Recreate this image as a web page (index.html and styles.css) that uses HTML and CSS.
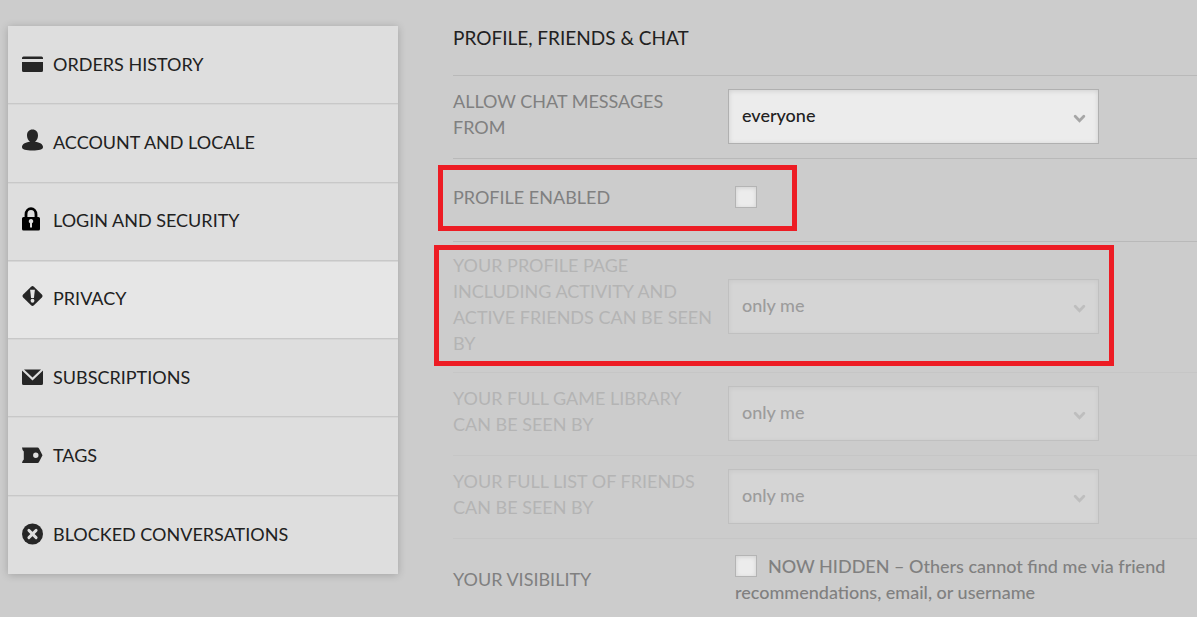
FILE: index.html
```html
<!DOCTYPE html>
<html lang="en">
<head>
    <meta charset="UTF-8">
    <meta name="viewport" content="width=device-width, initial-scale=1.0">
    <title>Privacy settings</title>
    <link rel="stylesheet" href="styles.css">
</head>
<body>
    <div class="page">
        <nav class="menu">
            <a class="menu-item" href="#orders">
                <svg class="icon" viewBox="0 0 21 22"><path d="M0 6V5Q0 3.500 1.500 3.500H19.500Q21 3.500 21 5V6ZM0 9H21V17.500Q21 19 19.500 19H1.500Q0 19 0 17.500Z"/></svg>
                Orders history
            </a>
            <a class="menu-item" href="#account">
                <svg class="icon icon-high" viewBox="0 0 21 22"><path d="M10.500 0.500C14 0.500 16 3 16 6.500C16 9 15 11.500 13 12.800C18 13.200 21 15.500 21 18C21 20.700 17 21.500 10.500 21.500S0 20.700 0 18C0 15.500 3 13.200 8 12.800C6 11.500 5 9 5 6.500C5 3 7 0.500 10.500 0.500Z"/></svg>
                Account and locale
            </a>
            <a class="menu-item" href="#login">
                <svg class="icon icon-lock" viewBox="0 0 21 24"><path d="M4 11V7.500C4 -0.300 14 -0.300 14 7.500V11" fill="none" stroke="#000" stroke-width="2.800"/><path fill-rule="evenodd" d="M1.500 10H16.500Q18 10 18 11.500V22Q18 23.500 16.500 23.500H1.500Q0 23.500 0 22V11.500Q0 10 1.500 10ZM9 12A2.200 2.200 0 0 0 8 16.200V20.500H10V16.200A2.200 2.200 0 0 0 9 12Z"/></svg>
                Login and security
            </a>
            <a class="menu-item active" href="#privacy">
                <svg class="icon icon-high" viewBox="0 0 22 22"><path d="M9.500 1.200Q11 -0.200 12.500 1.200L20.800 9.500Q22.200 11 20.800 12.500L12.500 20.800Q11 22.200 9.500 20.800L1.200 12.500Q-0.200 11 1.200 9.500Z"/><path class="cutout" d="M8.500 4.500H13.500L12.500 13H9.500Z"/><circle class="cutout" cx="11" cy="16" r="2"/></svg>
                Privacy
            </a>
            <a class="menu-item" href="#subscriptions">
                <svg class="icon" viewBox="0 0 21 22"><path d="M2 3.500H19L10.500 11.500ZM0 4.500L10.500 14.500L21 4.500V17.500Q21 19 19.500 19H1.500Q0 19 0 17.500Z"/></svg>
                Subscriptions
            </a>
            <a class="menu-item" href="#tags">
                <svg class="icon" viewBox="0 0 21 22"><path fill-rule="evenodd" d="M0 3.500H15.500Q16.500 3.500 17 4.500L20.500 11.200L17 18Q16.500 19 15.500 19H0Q0.300 16.500 1.800 15.500V7.500Q0.300 6.500 0 3.500ZM13.800 8.500A2.700 2.700 0 1 0 13.800 13.900A2.700 2.700 0 1 0 13.800 8.500Z"/></svg>
                Tags
            </a>
            <a class="menu-item" href="#blocked">
                <svg class="icon" viewBox="0 0 22 22"><circle cx="11" cy="11" r="11"/><path class="cross" d="M7.200 7.200L14.800 14.800M14.800 7.200L7.200 14.800"/></svg>
                Blocked conversations
            </a>
        </nav>

        <main class="settings">
            <h1 class="title">Profile, friends &amp; chat</h1>

            <div class="row">
                <label class="label" for="chat">Allow chat messages from</label>
                <div class="select">
                    <select id="chat"><option>everyone</option><option>only me</option></select>
                    <svg class="arrow" viewBox="0 0 12 8"><path d="M2 2L6 6L10 2"/></svg>
                </div>
            </div>

            <div class="row marked">
                <label class="label" for="enabled">Profile enabled</label>
                <div class="check"><input type="checkbox" id="enabled"></div>
                <div class="mark mark-enabled"></div>
            </div>

            <div class="row disabled marked">
                <label class="label" for="profile">Your profile page including activity and active friends can be seen by</label>
                <div class="select">
                    <select id="profile" disabled><option>only me</option></select>
                    <svg class="arrow" viewBox="0 0 12 8"><path d="M2 2L6 6L10 2"/></svg>
                </div>
                <div class="mark mark-profile"></div>
            </div>

            <div class="row disabled">
                <label class="label" for="library">Your full game library can be seen by</label>
                <div class="select">
                    <select id="library" disabled><option>only me</option></select>
                    <svg class="arrow" viewBox="0 0 12 8"><path d="M2 2L6 6L10 2"/></svg>
                </div>
            </div>

            <div class="row disabled">
                <label class="label" for="friends">Your full list of friends can be seen by</label>
                <div class="select">
                    <select id="friends" disabled><option>only me</option></select>
                    <svg class="arrow" viewBox="0 0 12 8"><path d="M2 2L6 6L10 2"/></svg>
                </div>
            </div>

            <div class="row">
                <div class="label">Your visibility</div>
                <label class="check"><input type="checkbox" id="hidden">NOW HIDDEN – Others cannot find me via friend recommendations, email, or username</label>
            </div>
        </main>
    </div>
</body>
</html>
```
FILE: styles.css
```css
* {
    margin: 0;
    padding: 0;
    box-sizing: border-box;
}

body {
    font-family: Lato, "Liberation Sans", sans-serif;
    font-size: 18px;
    line-height: 26px;
    color: #212121;
    background: #ccc;
}

.page {
    display: grid;
    grid-template-columns: 390px minmax(0, 1fr);
    column-gap: 55px;
    align-items: start;
    padding-left: 8px;
}

/* side menu */
.menu {
    display: grid;
    grid-auto-rows: 1fr;
    min-height: 548px;
    margin-top: 26px;
    background: #dedede;
    box-shadow: 0 1px 8px rgba(0, 0, 0, 0.2);
}

.menu-item {
    display: flex;
    align-items: center;
    gap: 10px;
    padding: 0 14px 2px;
    border-bottom: 1px solid #c8c8c8;
    box-shadow: inset 0 1px #d6d6d6;
    color: inherit;
    text-decoration: none;
    text-transform: uppercase;
}

.menu-item:first-child {
    box-shadow: none;
}

.menu-item:last-child {
    border-bottom: none;
}

.menu-item.active {
    background: #e6e6e6;
}

.icon {
    width: 21px;
    height: 22px;
    flex: none;
    fill: #262626;
}

.icon-high {
    margin-bottom: 4px;
}

.icon-lock {
    height: 24px;
    margin-bottom: 2px;
    fill: #000;
}

.cutout {
    fill: #e6e6e6;
}

.cross {
    stroke: #dedede;
    stroke-width: 3;
    stroke-linecap: round;
}

/* settings list */
.title {
    padding: 25px 0 24px;
    border-bottom: 1px solid #b9b9b9;
    font-size: 19px;
    font-weight: 400;
    text-transform: uppercase;
}

.row {
    display: grid;
    grid-template-columns: 275px minmax(0, 1fr);
    align-items: center;
    min-height: 83px;
    padding: 10px 0 12px;
    border-bottom: 1px solid #b9b9b9;
}

.row.disabled {
    border-bottom-color: #c6c6c6;
}

.row:last-child {
    min-height: 78px;
    padding: 13px 0 8px;
    border-bottom: none;
}

.label {
    padding: 0 13px 4px 0;
    color: #808080;
    text-transform: uppercase;
}

.disabled .label {
    color: #b4b4b4;
}

.select {
    position: relative;
    max-width: 371px;
}

select {
    display: block;
    width: 100%;
    height: 55px;
    padding: 0 40px 3px 13px;
    appearance: none;
    border: 1px solid #b0b0b0;
    border-radius: 0;
    background: #ececec;
    box-shadow: inset 0 1px 5px rgba(0, 0, 0, 0.12);
    color: #212121;
    font: inherit;
    font-weight: 500;
}

.arrow {
    position: absolute;
    top: 25px;
    right: 13px;
    width: 13px;
    height: 9px;
    fill: none;
    stroke: #a6a6a6;
    stroke-width: 2.6;
    stroke-linecap: round;
}

.disabled select {
    border-color: #c0c0c0;
    background: #d5d5d5;
    box-shadow: inset 0 1px 5px rgba(0, 0, 0, 0.06);
    color: #9c9c9c;
    opacity: 1;
}

.disabled .arrow {
    stroke: #bebebe;
}

.check {
    padding: 0 7px 4px;
    color: #808080;
    font-weight: 500;
}

input[type="checkbox"] {
    width: 22px;
    height: 22px;
    margin-right: 11px;
    appearance: none;
    vertical-align: -4px;
    border: 1px solid #b4b4b4;
    background: #ececec;
    box-shadow: inset 0 1px 4px rgba(0, 0, 0, 0.12);
}

input[type="checkbox"]:checked {
    background: #808080;
}

/* red frames over the rows */
.marked {
    position: relative;
}

.mark {
    position: absolute;
    border: 5px solid #ed1c24;
    pointer-events: none;
}

.mark-enabled {
    top: 6px;
    left: -15px;
    width: 359px;
    height: 66px;
}

.mark-profile {
    top: 3px;
    left: -19px;
    width: 680px;
    height: 121px;
}
```
